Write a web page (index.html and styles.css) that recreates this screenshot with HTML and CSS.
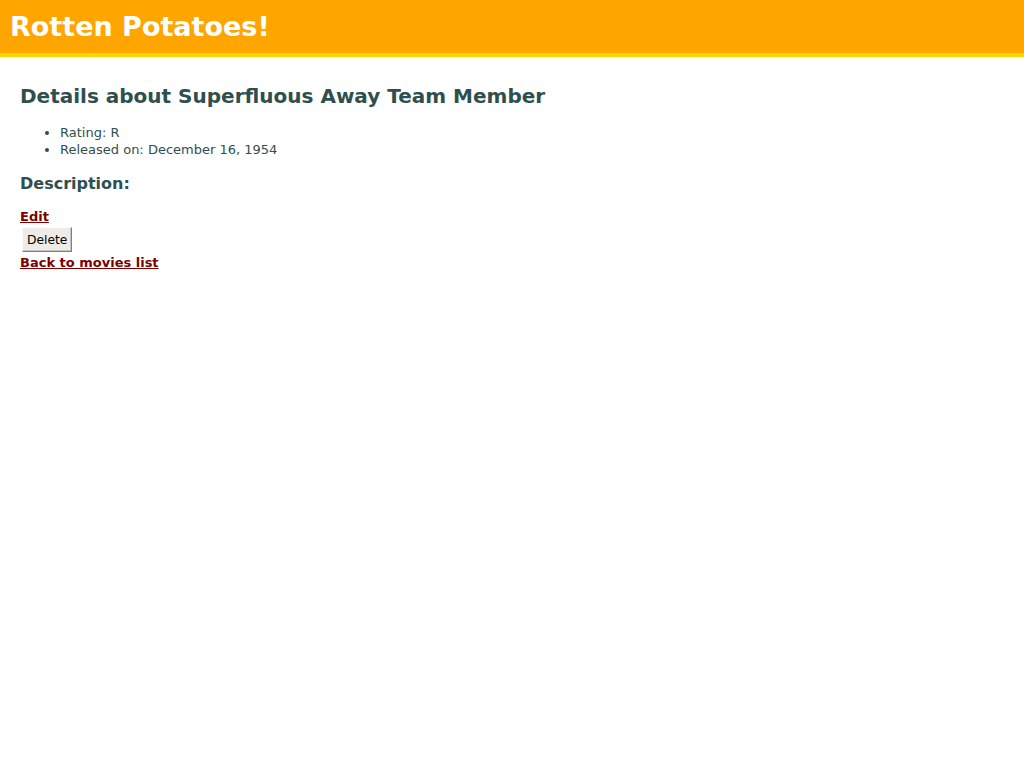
FILE: index.html
```html
<!DOCTYPE html>
<html>
<head>
<meta charset="utf-8">
<title>Rotten Potatoes!</title>
<link rel="stylesheet" href="styles.css">
</head>
<body>
<h1 class="title">Rotten Potatoes!</h1>
<div id="main">
  <h2>Details about Superfluous Away Team Member</h2>
  <ul id="details">
    <li>Rating: R</li>
    <li>Released on: December 16, 1954</li>
  </ul>
  <h3>Description:</h3>
  <p id="description"></p>
  <a href="#">Edit</a>
  <form class="button-to"><button type="button" class="btn">Delete</button></form>
  <a href="#">Back to movies list</a>
</div>
</body>
</html>
```

FILE: styles.css
```css
html, body {
  margin: 0;
  padding: 0;
  background: #ffffff;
  color: darkslategrey;
  font-family: "DejaVu Sans", Verdana, sans-serif;
  font-size: 13px;
  line-height: 17px;
}
.title {
  margin: 0 0 27px;
  padding: 10px;
  background-color: orange;
  color: white;
  border-bottom: 4px solid gold;
  font-size: 27px;
  line-height: 33px;
  font-weight: bold;
}
#main {
  margin: 0;
  padding: 0 20px 20px;
}
h2 {
  font-size: 20px;
  line-height: normal;
  margin: 16.6px 0 15.6px;
}
#details {
  margin: 13px 0;
  padding-left: 40px;
}
h3 {
  font-size: 16px;
  line-height: normal;
  margin: 16px 0 15px;
}
#description {
  margin: 13px 0;
}
a {
  color: maroon;
  font-weight: bold;
  text-decoration: underline;
}
.button-to {
  margin: 0;
}
.btn {
  font-family: "DejaVu Sans", Verdana, sans-serif;
  font-size: 12.3px;
  line-height: 14px;
  color: #000;
  background: #efebe7;
  margin: 2px 2px 2px;
  padding: 5px 4px 4px 4px;
  border: 1px solid;
  border-color: #fbfbfb #7f7f7f #7f7f7f #fbfbfb;
  box-shadow: inset -1px -1px 0 #c4c4c4;
}
```
